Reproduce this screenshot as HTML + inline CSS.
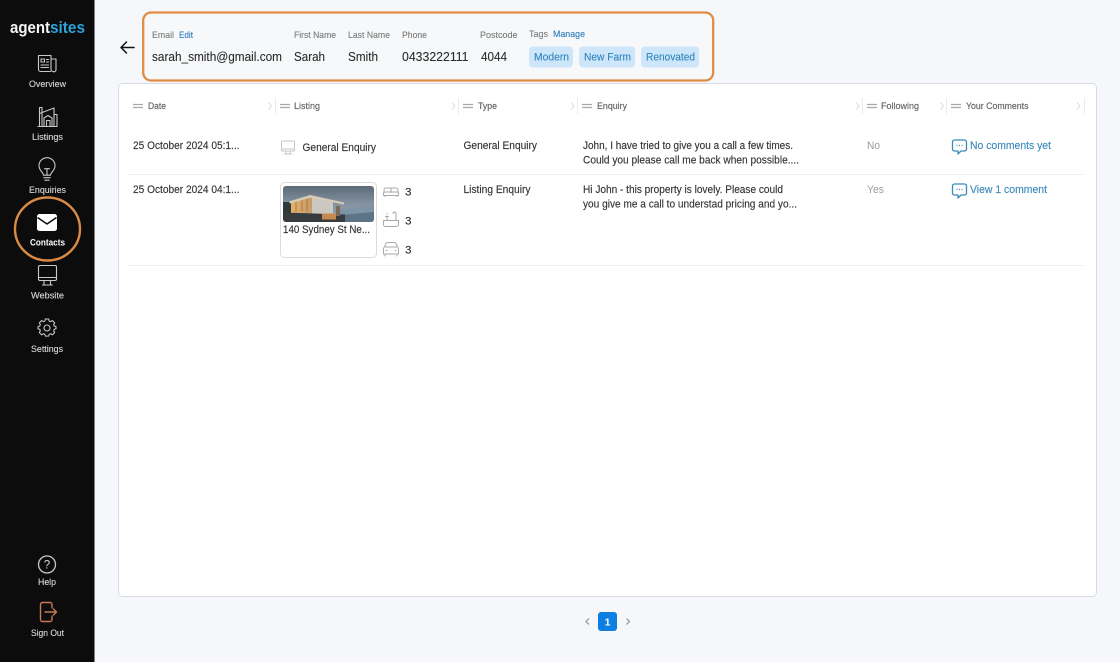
<!DOCTYPE html>
<html lang="en"><head><meta charset="utf-8"><title>Contact</title>
<style>
html,body{margin:0;padding:0;width:1120px;height:662px;overflow:hidden;background:#f5f7fa}
svg{display:block;filter:blur(.3px)}
text{font-family:"Liberation Sans",sans-serif}
.nav{font-size:9.5px;fill:#d8d8d8;stroke:#d8d8d8;stroke-width:.12}
.lab{font-size:9.500px;fill:#7a7a7a;stroke:#7a7a7a;stroke-width:.1}
.lnk{font-size:9.500px;fill:#2f7fbd;stroke:#2f7fbd;stroke-width:.12}
.val{font-size:13px;fill:#2b2b2b;stroke:#2b2b2b;stroke-width:.1}
.chip{font-size:11px;fill:#2f85bd;stroke:#2f85bd;stroke-width:.12}
.th{font-size:9.500px;fill:#666;stroke:#666;stroke-width:.18}
.td{font-size:11px;fill:#333;stroke:#333;stroke-width:.14}
.mut{font-size:11px;fill:#9a9a9a}
.cm{font-size:11px;fill:#3b8abb;stroke:#3b8abb;stroke-width:.14}
.ic{fill:none;stroke:#c8c8c8;stroke-width:1.1;stroke-linecap:round;stroke-linejoin:round}
.gi{fill:none;stroke:#a9a9a9;stroke-width:1;stroke-linecap:round;stroke-linejoin:round}
.ci{fill:none;stroke:#3b8abb;stroke-width:1.3;stroke-linejoin:round}
.hb{stroke:#a8a8a8;stroke-width:1.2}
.ch{fill:none;stroke:#dedede;stroke-width:1}
.sp{stroke:#ececec;stroke-width:1}
</style></head><body>
<svg width="1120" height="662" viewBox="0 0 1120 662" xmlns="http://www.w3.org/2000/svg">
<defs>
<linearGradient id="sky" x1="0" y1="0" x2="0" y2="1"><stop offset="0" stop-color="#5c6a78"/><stop offset=".5" stop-color="#8593a1"/><stop offset="1" stop-color="#93a5b4"/></linearGradient>
<linearGradient id="glow" x1="0" y1="0" x2="1" y2="0"><stop offset="0" stop-color="#e6b06a"/><stop offset="1" stop-color="#c99a68"/></linearGradient>
<clipPath id="imc"><rect x="283" y="186" width="91" height="36" rx="3"/></clipPath>
</defs>

<rect width="1120" height="662" fill="#f5f7fa"/>
<rect width="94.500" height="662" fill="#0c0c0c"/>

<!-- logo -->
<text x="10" y="33" font-size="16.500" font-weight="700" fill="#f4f4f4" textLength="40" lengthAdjust="spacingAndGlyphs">agent</text>
<text x="50" y="33" font-size="16.500" font-weight="700" fill="#2ba3d8" textLength="35" lengthAdjust="spacingAndGlyphs">sites</text>

<!-- Overview -->
<g class="ic">
<path d="M50.500 71.500H40.500a2 2 0 0 1-2-2V55.500h12.500v14a2 2 0 0 0 2 2 2 2 0 0 0 3-2V59h-5"/>
<path d="M41 59h3.500v3H41zM46.500 59.500h2M46.500 62h2M41 65h7.500M41 67.500h7.500"/>
</g>
<text class="nav" x="29" y="87" textLength="37" lengthAdjust="spacingAndGlyphs">Overview</text>

<!-- Listings -->
<g class="ic">
<path d="M38 126.500H57M39.500 126.500V107.500M39.500 113.500L54 108M42 114V126.500M54 108V126.500M39.500 107.500H42V114"/>
<path d="M44 126.500V118L48 115.500 52 118V126.500M46.500 126.500V120.500H50V126.500M54 114.500H57V126.500"/>
</g>
<text class="nav" x="32" y="140" textLength="31" lengthAdjust="spacingAndGlyphs">Listings</text>

<!-- Enquiries -->
<g class="ic" transform="translate(0 2.200)">
<path d="M43.500 173c0-3-4.500-4.500-4.500-9.500a8 8 0 0 1 16 0c0 5-4.500 6.500-4.500 9.500z"/>
<path d="M44.500 166.500h5M47 166.500V173M43.800 175.500h6.400M44.800 178h4.400"/>
</g>
<text class="nav" x="29" y="193" textLength="37" lengthAdjust="spacingAndGlyphs">Enquiries</text>

<!-- Contacts -->
<ellipse cx="47.500" cy="229" rx="32.500" ry="31.500" fill="none" stroke="#d98a45" stroke-width="2.400"/>
<rect x="37" y="214" width="20" height="17" rx="2.500" fill="#fff"/>
<path d="M37.500 217.500L47 224 56.500 217.500" fill="none" stroke="#0c0c0c" stroke-width="1.500"/>
<text x="30" y="245.500" font-size="9.500" font-weight="700" fill="#fff" textLength="35" lengthAdjust="spacingAndGlyphs">Contacts</text>

<!-- Website -->
<g class="ic">
<rect x="38.500" y="265.500" width="18" height="15" rx="1.500"/>
<path d="M38.500 277.500h18M44 280.500v4M50.500 280.500v4M42.500 285h10"/>
</g>
<text class="nav" x="31" y="298.500" textLength="33" lengthAdjust="spacingAndGlyphs">Website</text>

<!-- Settings -->
<g class="ic">
<circle cx="47" cy="328" r="3"/>
<path style="stroke-width:1.300" d="M45 319.500h4l.6 2.400 1.900 .8 2.100-1.300 2.800 2.800-1.300 2.100 .8 1.900 2.100 .6v2.600l-2.100 .6-.8 1.900 1.300 2.100-2.800 2.800-2.100-1.300-1.900 .8-.6 2.100h-4l-.6-2.100-1.900-.8-2.100 1.300-2.800-2.800 1.300-2.100-.8-1.900-2.100-.6v-2.600l2.100-.6 .8-1.900-1.300-2.100 2.800-2.800 2.100 1.300 1.900-.8z" transform="translate(8.460 57) scale(.82)"/>
</g>
<text class="nav" x="31" y="352" textLength="32" lengthAdjust="spacingAndGlyphs">Settings</text>

<!-- Help -->
<circle cx="47" cy="564.500" r="8.500" class="ic" style="stroke-width:1.300"/>
<text x="47" y="568.500" font-size="11.500" fill="#d8d8d8" text-anchor="middle">?</text>
<text class="nav" x="38" y="585" textLength="18" lengthAdjust="spacingAndGlyphs">Help</text>

<!-- Sign out -->
<g fill="none" stroke="#c9785a" stroke-width="1.400" stroke-linecap="round" stroke-linejoin="round">
<path d="M52 608v-3.500a2 2 0 0 0-2-2h-7.500a2 2 0 0 0-2 2v15a2 2 0 0 0 2 2H50a2 2 0 0 0 2-2V616"/>
<path d="M45 612h11.500M53.500 609l3 3-3 3"/>
</g>
<text class="nav" x="31" y="636" textLength="33" lengthAdjust="spacingAndGlyphs">Sign Out</text>

<!-- back arrow -->
<path d="M121 47.500H134M126.500 42L121 47.500 126.500 53" fill="none" stroke="#111" stroke-width="1.500" stroke-linecap="round" stroke-linejoin="round"/>

<!-- header box -->
<rect x="143.200" y="12.500" width="570" height="68" rx="8" fill="#f6f8fa" stroke="#df8c45" stroke-width="2.300"/>
<text class="lab" x="152" y="38" textLength="22" lengthAdjust="spacingAndGlyphs">Email</text>
<text class="lnk" x="179" y="38" textLength="14" lengthAdjust="spacingAndGlyphs">Edit</text>
<text class="lab" x="294" y="38" textLength="42" lengthAdjust="spacingAndGlyphs">First Name</text>
<text class="lab" x="348" y="38" textLength="42" lengthAdjust="spacingAndGlyphs">Last Name</text>
<text class="lab" x="402" y="38" textLength="25" lengthAdjust="spacingAndGlyphs">Phone</text>
<text class="lab" x="480" y="38" textLength="37.500" lengthAdjust="spacingAndGlyphs">Postcode</text>
<text class="lab" x="529" y="37" textLength="19" lengthAdjust="spacingAndGlyphs">Tags</text>
<text class="lnk" x="553" y="37" textLength="32" lengthAdjust="spacingAndGlyphs">Manage</text>
<text class="val" x="152" y="61" textLength="130" lengthAdjust="spacingAndGlyphs">sarah_smith@gmail.com</text>
<text class="val" x="294" y="61" textLength="31" lengthAdjust="spacingAndGlyphs">Sarah</text>
<text class="val" x="348" y="61" textLength="30" lengthAdjust="spacingAndGlyphs">Smith</text>
<text class="val" x="402" y="61" textLength="66.500" lengthAdjust="spacingAndGlyphs">0433222111</text>
<text class="val" x="481" y="61" textLength="26" lengthAdjust="spacingAndGlyphs">4044</text>
<rect x="529" y="46.500" width="44" height="21" rx="4" fill="#cde6f9"/>
<rect x="579" y="46.500" width="56" height="21" rx="4" fill="#cde6f9"/>
<rect x="641" y="46.500" width="58" height="21" rx="4" fill="#cde6f9"/>
<text class="chip" x="534" y="60.500" textLength="35" lengthAdjust="spacingAndGlyphs">Modern</text>
<text class="chip" x="584" y="60.500" textLength="47" lengthAdjust="spacingAndGlyphs">New Farm</text>
<text class="chip" x="646" y="60.500" textLength="49" lengthAdjust="spacingAndGlyphs">Renovated</text>

<!-- table card -->
<rect x="118.500" y="83.500" width="978" height="513" rx="4" fill="#fff" stroke="#d9dde1"/>

<!-- header icons -->
<g class="hb">
<path d="M133 104.500h10M133 107.500h10M280 104.500h10M280 107.500h10M463 104.500h10M463 107.500h10M582 104.500h10M582 107.500h10M867 104.500h10M867 107.500h10M951 104.500h10M951 107.500h10"/>
</g>
<path class="ch" d="M268.500 102.500l3 3.500-3 3.500M452 102.500l3 3.500-3 3.500M571 102.500l3 3.500-3 3.500M856 102.500l3 3.500-3 3.500M940.500 102.500l3 3.500-3 3.500M1077 102.500l3 3.500-3 3.500"/>
<path class="sp" d="M275.500 98v16M458.500 98v16M577.500 98v16M862.500 98v16M946.500 98v16M1084.500 98v16"/>
<text class="th" x="148" y="109" textLength="18" lengthAdjust="spacingAndGlyphs">Date</text>
<text class="th" x="294" y="109" textLength="26" lengthAdjust="spacingAndGlyphs">Listing</text>
<text class="th" x="478" y="109" textLength="19" lengthAdjust="spacingAndGlyphs">Type</text>
<text class="th" x="597" y="109" textLength="30" lengthAdjust="spacingAndGlyphs">Enquiry</text>
<text class="th" x="881" y="109" textLength="38" lengthAdjust="spacingAndGlyphs">Following</text>
<text class="th" x="966" y="109" textLength="62.500" lengthAdjust="spacingAndGlyphs">Your Comments</text>

<!-- row 1 -->
<text class="td" x="133" y="149" textLength="106.500" lengthAdjust="spacingAndGlyphs">25 October 2024 05:1...</text>
<g class="gi" style="stroke:#c4c4c4">
<rect x="281.500" y="141" width="13" height="10" rx="1"/>
<path d="M281.500 149h13M286 151v2.500M290 151v2.500M284.500 154h7"/>
</g>
<text class="td" x="302.500" y="151" textLength="73.500" lengthAdjust="spacingAndGlyphs">General Enquiry</text>
<text class="td" x="463.500" y="149" textLength="73.500" lengthAdjust="spacingAndGlyphs">General Enquiry</text>
<text class="td" x="583" y="149" textLength="210" lengthAdjust="spacingAndGlyphs">John, I have tried to give you a call a few times.</text>
<text class="td" x="583" y="163.500" textLength="216" lengthAdjust="spacingAndGlyphs">Could you please call me back when possible....</text>
<text class="mut" x="867" y="149" textLength="13" lengthAdjust="spacingAndGlyphs">No</text>
<path class="ci" d="M954.500 140h10a2 2 0 0 1 2 2v7a2 2 0 0 1-2 2H961l-3 3v-3h-3.500a2 2 0 0 1-2-2v-7a2 2 0 0 1 2-2z"/>
<path d="M956.500 145.500h1M959 145.500h1M961.500 145.500h1" stroke="#3b8abb" stroke-width="1.300"/>
<text class="cm" x="970" y="149" textLength="81" lengthAdjust="spacingAndGlyphs">No comments yet</text>
<path d="M128 174.500H1084" stroke="#eeeeee"/>

<!-- row 2 -->
<text class="td" x="133" y="193" textLength="106.500" lengthAdjust="spacingAndGlyphs">25 October 2024 04:1...</text>
<rect x="280.500" y="182.500" width="96" height="75" rx="4" fill="#fff" stroke="#dcdcdc"/>
<g clip-path="url(#imc)">
<rect x="283" y="186" width="91" height="36" fill="url(#sky)"/>
<path d="M340 210L374 205V222H340z" fill="#7d93a6"/>
<path d="M340 215L374 212V222H340z" fill="#5c7488"/>
<path d="M283 202h8v12h-8z" fill="#2c3a38"/>
<path d="M312 197L333 202V214H312z" fill="#cbc8c1"/>
<path d="M291 202L312 197V213H291z" fill="url(#glow)"/>
<path d="M296 201v11M302 199.500v12M307 198.500v13" stroke="#a67a4c" stroke-width="1"/>
<path d="M289 201.500L310 195 344 202.500V204.500L310 197.800 290 203.500z" fill="#d5ccb9"/>
<path d="M283 212.500L345 214.500V222H283z" fill="#383c3e"/>
<path d="M322 213.500h14v6h-14z" fill="#c48a4f"/>
<path d="M336 206h4v10h-4z" fill="#7c6a58"/>
</g>
<text class="td" x="283" y="233" textLength="87" lengthAdjust="spacingAndGlyphs">140 Sydney St Ne...</text>

<g class="gi">
<path d="M384 192.500v-2.500a2 2 0 0 1 2-2h10a2 2 0 0 1 2 2v2.500M391 188v4.500"/>
<path d="M383.500 195.500v-2a1.500 1.500 0 0 1 1.500-1.500h12a1.500 1.500 0 0 1 1.500 1.500v2zM385 195.500v1M397 195.500v1"/>
</g>
<text class="td" x="405" y="195.500" textLength="6.500" lengthAdjust="spacingAndGlyphs">3</text>
<g class="gi">
<path d="M383.500 220.500h15v4a2 2 0 0 1-2 2h-11a2 2 0 0 1-2-2zM396 220.500v-7a1.500 1.500 0 0 0-3 0M387 216v4.500"/>
<path d="M385.500 216.500h3M387 213.500v.5"/>
</g>
<text class="td" x="405" y="224.500" textLength="6.500" lengthAdjust="spacingAndGlyphs">3</text>
<g class="gi">
<path d="M383.500 254v-5.500a2 2 0 0 1 1-1.500l1.500-3.500a2 2 0 0 1 2-1h6a2 2 0 0 1 2 1l1.500 3.500a2 2 0 0 1 1 1.500V254zM385.500 247h11M385 254v2M397 254v2"/>
<path d="M386 250.500h1M395 250.500h1"/>
</g>
<text class="td" x="405" y="253.500" textLength="6.500" lengthAdjust="spacingAndGlyphs">3</text>

<text class="td" x="463.500" y="193" textLength="67" lengthAdjust="spacingAndGlyphs">Listing Enquiry</text>
<text class="td" x="583" y="193" textLength="200" lengthAdjust="spacingAndGlyphs">Hi John - this property is lovely. Please could</text>
<text class="td" x="583" y="207.500" textLength="214" lengthAdjust="spacingAndGlyphs">you give me a call to understad pricing and yo...</text>
<text class="mut" x="867" y="193" textLength="17" lengthAdjust="spacingAndGlyphs">Yes</text>
<path class="ci" d="M954.500 184h10a2 2 0 0 1 2 2v7a2 2 0 0 1-2 2H961l-3 3v-3h-3.500a2 2 0 0 1-2-2v-7a2 2 0 0 1 2-2z"/>
<path d="M956.500 189.500h1M959 189.500h1M961.500 189.500h1" stroke="#3b8abb" stroke-width="1.300"/>
<text class="cm" x="970" y="193" textLength="77" lengthAdjust="spacingAndGlyphs">View 1 comment</text>
<path d="M128 265.500H1084" stroke="#eeeeee"/>

<!-- pagination -->
<rect x="598" y="612" width="19" height="19" rx="3" fill="#0c80e2"/>
<text x="607.500" y="625.500" font-size="10.500" font-weight="700" fill="#fff" text-anchor="middle">1</text>
<path d="M589 618.500l-3 3 3 3M626.500 618.500l3 3-3 3" fill="none" stroke="#9a9fa5" stroke-width="1.300"/>
</svg>
</body></html>
